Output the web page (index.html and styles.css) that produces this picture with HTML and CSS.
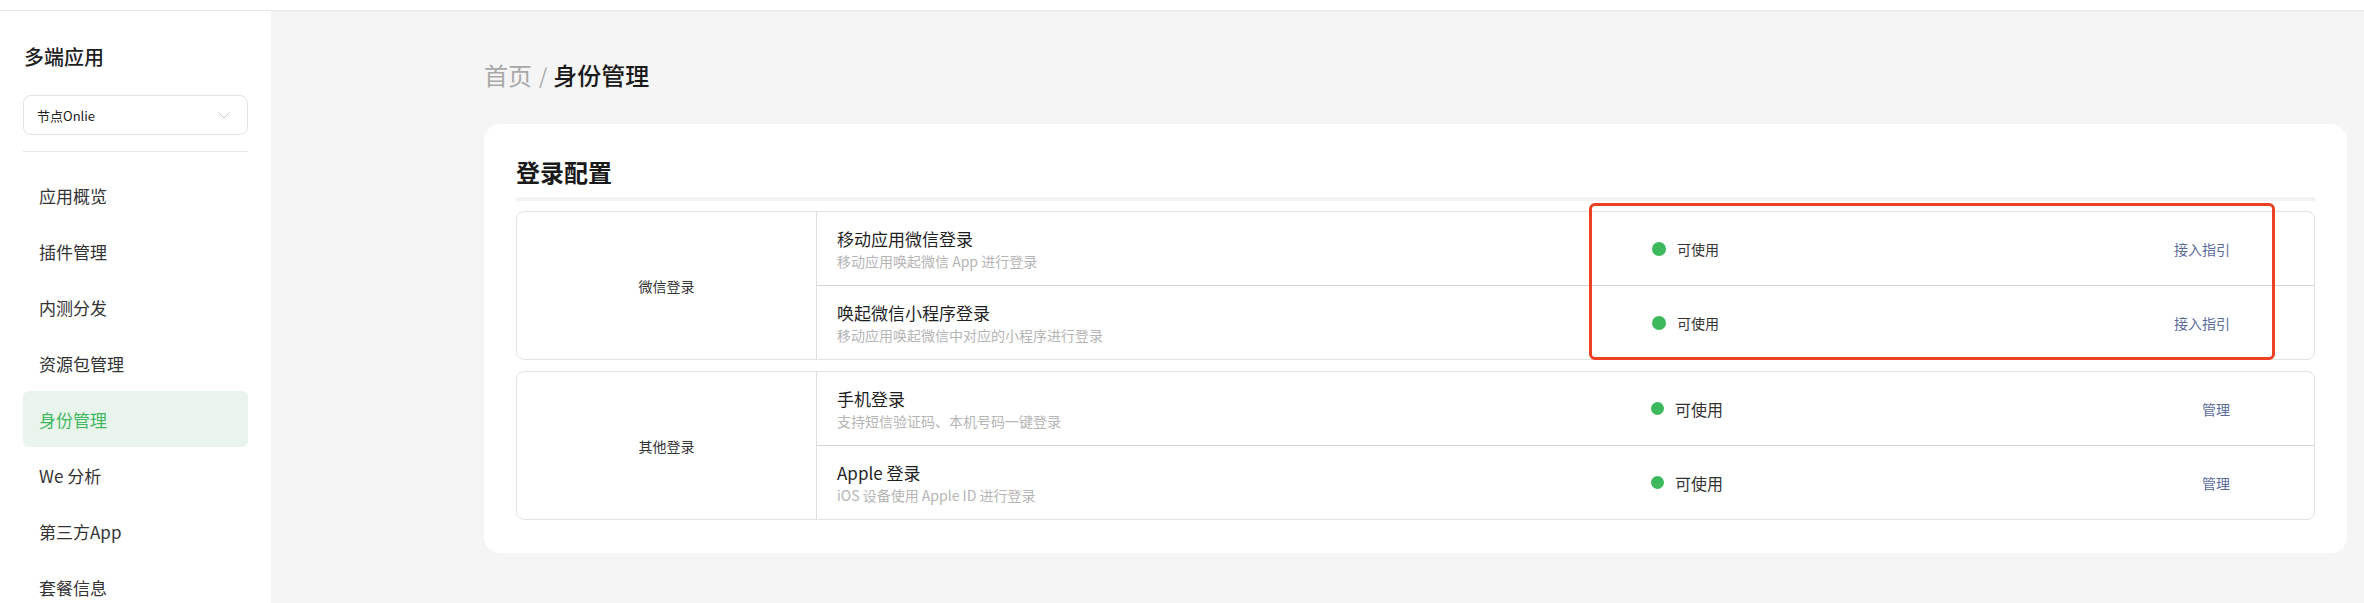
FILE: index.html
```html
<!DOCTYPE html>
<html lang="zh-CN">
<head>
<meta charset="utf-8">
<title>身份管理</title>
<link rel="stylesheet" href="styles.css">
</head>
<body>
<div class="topbar"></div>
<div class="layout">
  <aside class="sidebar">
    <div class="side-title">多端应用</div>
    <div class="select">
      <span class="select-text">节点Onlie</span>
      <svg class="chevron" width="12" height="7" viewBox="0 0 12 7"><polyline points="0.5,0.5 6,6 11.5,0.5" fill="none" stroke="#c4c4c4" stroke-width="1"/></svg>
    </div>
    <div class="side-divider"></div>
    <nav class="menu">
      <div class="menu-item">应用概览</div>
      <div class="menu-item">插件管理</div>
      <div class="menu-item">内测分发</div>
      <div class="menu-item">资源包管理</div>
      <div class="menu-item active">身份管理</div>
      <div class="menu-item">We 分析</div>
      <div class="menu-item">第三方App</div>
      <div class="menu-item">套餐信息</div>
    </nav>
  </aside>
  <main class="main">
    <div class="breadcrumb"><span class="crumb-home">首页</span><span class="crumb-sep">/</span><span class="crumb-current">身份管理</span></div>
    <section class="card">
      <h2 class="card-title">登录配置</h2>
      <div class="card-bar"></div>
      <div class="groups">
        <div class="group">
          <div class="category">微信登录</div>
          <div class="rows">
            <div class="row">
              <div class="info"><div class="name">移动应用微信登录</div><div class="desc">移动应用唤起微信 App 进行登录</div></div>
              <div class="status"><span class="dot"></span>可使用</div>
              <div class="action">接入指引</div>
            </div>
            <div class="row">
              <div class="info"><div class="name">唤起微信小程序登录</div><div class="desc">移动应用唤起微信中对应的小程序进行登录</div></div>
              <div class="status"><span class="dot"></span>可使用</div>
              <div class="action">接入指引</div>
            </div>
          </div>
          <div class="highlight"></div>
        </div>
        <div class="group">
          <div class="category">其他登录</div>
          <div class="rows">
            <div class="row">
              <div class="info"><div class="name">手机登录</div><div class="desc">支持短信验证码、本机号码一键登录</div></div>
              <div class="status status-lg"><span class="dot dot-sm"></span>可使用</div>
              <div class="action">管理</div>
            </div>
            <div class="row">
              <div class="info"><div class="name">Apple 登录</div><div class="desc">iOS 设备使用 Apple ID 进行登录</div></div>
              <div class="status status-lg"><span class="dot dot-sm"></span>可使用</div>
              <div class="action">管理</div>
            </div>
          </div>
        </div>
      </div>
    </section>
  </main>
</div>
</body>
</html>
```

FILE: styles.css
```css
html, body {
  margin: 0;
  padding: 0;
  height: 100%;
  overflow: hidden;
}
body {
  background: #ffffff;
  font-family: "Noto Sans CJK SC", "Noto Sans", sans-serif;
  color: #222222;
}
.topbar {
  height: 10px;
  border-bottom: 1px solid #e6e6e6;
  background: #ffffff;
}
.layout {
  display: flex;
  height: calc(100vh - 11px);
}
.sidebar {
  width: 271px;
  flex: none;
  box-sizing: border-box;
  padding: 0 23px 0 23px;
  background: #ffffff;
}
.side-title {
  margin-top: 32px;
  font-size: 20px;
  line-height: 28px;
  font-weight: 500;
  color: #1f1f1f;
  padding-left: 1px;
}
.select {
  margin-top: 24px;
  height: 40px;
  box-sizing: border-box;
  border: 1px solid #e3e3e3;
  border-radius: 8px;
  display: flex;
  align-items: center;
  justify-content: space-between;
  padding: 0 17px 0 13px;
}
.select-text {
  font-size: 13px;
  color: #222222;
}
.chevron {
  display: block;
}
.side-divider {
  margin-top: 16px;
  height: 1px;
  background: #e6e6e6;
}
.menu {
  margin-top: 15px;
  display: flex;
  flex-direction: column;
}
.menu-item {
  height: 56px;
  display: flex;
  align-items: center;
  padding-left: 16px;
  font-size: 17px;
  color: #333333;
  border-radius: 6px;
}
.menu-item.active {
  background: #e9f5ec;
  color: #3fb75f;
}
.main {
  flex: 1;
  background: #f5f5f5;
  padding: 0 17px 0 213px;
  min-width: 0;
}
.breadcrumb {
  margin-top: 48px;
  font-size: 24px;
  line-height: 32px;
  display: flex;
  align-items: center;
}
.crumb-home {
  color: #a8a8a8;
}
.crumb-sep {
  color: #a8a8a8;
  margin: 0 6px 0 7px;
  font-size: 21px;
}
.crumb-current {
  color: #1a1a1a;
  font-weight: 500;
  font-size: 24px;
}
.card {
  margin-top: 33px;
  background: #ffffff;
  border-radius: 16px;
  padding: 32px 32px 33px 32px;
}
.card-title {
  margin: 0;
  font-size: 24px;
  line-height: 32px;
  font-weight: 600;
  color: #1a1a1a;
}
.card-bar {
  margin-top: 9px;
  height: 4px;
  background: #f3f3f3;
}
.groups {
  margin-top: 10px;
  display: flex;
  flex-direction: column;
  gap: 11px;
}
.group {
  position: relative;
  display: grid;
  grid-template-columns: 300px 1fr;
  border: 1px solid #e3e3e3;
  border-radius: 8px;
}
.category {
  border-right: 1px solid #e0e0e0;
  display: flex;
  align-items: center;
  justify-content: center;
  font-size: 14px;
  color: #333333;
}
.rows {
  display: flex;
  flex-direction: column;
}
.row {
  height: 73px;
  display: grid;
  grid-template-columns: 1fr 479px 100px;
  align-items: center;
  padding: 0 84px 0 20px;
}
.row + .row {
  border-top: 1px solid #d6d6d6;
}
.info {
  display: flex;
  flex-direction: column;
}
.name {
  font-size: 17px;
  line-height: 24px;
  color: #1f1f1f;
}
.desc {
  font-size: 14px;
  line-height: 20px;
  color: #b5b5b5;
}
.status {
  display: flex;
  align-items: center;
  font-size: 14px;
  color: #333333;
  padding-left: 1px;
}
.status-lg {
  font-size: 16px;
  padding-left: 0;
}
.dot {
  width: 14px;
  height: 14px;
  border-radius: 50%;
  background: #3cb95d;
  margin-right: 11px;
  flex: none;
}
.dot-sm {
  width: 13px;
  height: 13px;
}
.action {
  text-align: right;
  font-size: 14px;
  color: #5c6b99;
}
.highlight {
  position: absolute;
  left: 1072px;
  top: -9px;
  width: 686px;
  height: 157px;
  box-sizing: border-box;
  border: 3px solid #ee4124;
  border-radius: 6px;
  pointer-events: none;
}
```
